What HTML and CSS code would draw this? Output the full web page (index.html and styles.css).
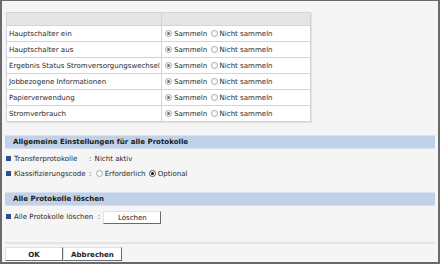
FILE: index.html
```html
<!DOCTYPE html>
<html lang="de">
<head>
    <meta charset="UTF-8">
    <title>Protokolleinstellungen</title>
    <link rel="stylesheet" href="styles.css">
</head>
<body>
    <div class="window">

        <!-- Log table -->
        <table class="log-table">
            <tr class="head"><th class="col-name"></th><th></th></tr>
            <tr>
                <td>Hauptschalter ein</td>
                <td><span class="radio dim"></span>Sammeln <span class="radio"></span>Nicht sammeln</td>
            </tr>
            <tr>
                <td>Hauptschalter aus</td>
                <td><span class="radio dim"></span>Sammeln <span class="radio"></span>Nicht sammeln</td>
            </tr>
            <tr>
                <td>Ergebnis Status Stromversorgungswechsel</td>
                <td><span class="radio dim"></span>Sammeln <span class="radio"></span>Nicht sammeln</td>
            </tr>
            <tr>
                <td>Jobbezogene Informationen</td>
                <td><span class="radio dim"></span>Sammeln <span class="radio"></span>Nicht sammeln</td>
            </tr>
            <tr>
                <td>Papierverwendung</td>
                <td><span class="radio dim"></span>Sammeln <span class="radio"></span>Nicht sammeln</td>
            </tr>
            <tr>
                <td>Stromverbrauch</td>
                <td><span class="radio dim"></span>Sammeln <span class="radio"></span>Nicht sammeln</td>
            </tr>
        </table>

        <!-- General settings -->
        <div class="section first">
            <div class="band">Allgemeine Einstellungen für alle Protokolle</div>
            <div class="item">
                <span class="bullet"></span><span class="key">Transferprotokolle</span><span class="sep">:</span> Nicht aktiv
            </div>
            <div class="item">
                <span class="bullet"></span><span class="key">Klassifizierungscode</span><span class="sep">:</span>
                <span class="radio"></span>Erforderlich
                <span class="radio on"></span>Optional
            </div>
        </div>

        <!-- Delete logs -->
        <div class="section">
            <div class="band">Alle Protokolle löschen</div>
            <div class="item item-delete">
                <span class="bullet"></span>Alle Protokolle löschen&nbsp; :
                <button class="btn btn-delete">Löschen</button>
            </div>
        </div>

        <div class="footer">
            <button class="btn btn-foot">OK</button><button class="btn btn-foot">Abbrechen</button>
        </div>
    </div>
</body>
</html>
```

FILE: styles.css
```css
* {
    margin: 0;
    padding: 0;
    box-sizing: border-box;
    font-family: "DejaVu Sans", Verdana, sans-serif;
}
body {
    background: #f5f5f5;
    font-size: 7.05px;
    color: #2a2a2a;
}

/* Window frame */
.window {
    width: 440px;
    height: 264px;
    border: 2px solid #6a6a6a;
    border-top-width: 1px;
    background: #f5f5f5;
    padding: 11px 3px 0 3px;
}

/* Log table */
.log-table {
    border-collapse: collapse;
    width: 305px;
    margin-left: 1px;
    background: #fff;
    box-shadow: 1px 1px 1px rgba(0, 0, 0, 0.08);
}
.log-table th, .log-table td {
    border: 1px solid #d4d4d4;
    text-align: left;
    white-space: nowrap;
}
.log-table th {
    background: #e5e5e5;
    height: 13px;
}
.log-table td {
    height: 16px;
    padding: 0 1px 0 2px;
    line-height: 14px;
}
.col-name { width: 155px; }

/* Radios */
.radio {
    display: inline-block;
    width: 7px;
    height: 7px;
    border: 1px solid #a8a8a8;
    border-radius: 50%;
    background: #fafafa;
    vertical-align: -1px;
    margin: 0 2px 0 1px;
    position: relative;
}
.radio.dim::after, .radio.on::after {
    content: "";
    position: absolute;
    left: 1px;
    top: 1px;
    width: 3px;
    height: 3px;
    border-radius: 50%;
    background: #6f6f6f;
}
.radio.on { border-color: #555; }
.radio.on::after { background: #111; }

/* Sections */
.section {
    margin-top: 11px;
}
.section.first { margin-top: 13px; }
.band {
    background: #c0d1e8;
    border-top: 1px solid #d6e2f2;
    border-bottom: 1px solid #d6e2f2;
    height: 14px;
    line-height: 12px;
    padding-left: 8px;
    font-weight: bold;
    color: #1a1a1a;
}
.item {
    height: 15px;
    line-height: 15px;
    padding-left: 1px;
    white-space: nowrap;
}
.section.first .band { margin-bottom: 2px; }
.item-delete {
    margin-top: 4px;
    height: 14px;
    line-height: 14px;
}
.bullet {
    display: inline-block;
    width: 5px;
    height: 5px;
    background: #2e4f8f;
    margin-right: 3px;
    vertical-align: 0;
}
.key {
    display: inline-block;
    width: 75px;
}
.sep { margin-right: 1px; }

/* Buttons */
.btn {
    background: #fff;
    border: 1px solid #e2e2e2;
    border-right-color: #6a6a6a;
    border-bottom-color: #6a6a6a;
    font-size: 7.05px;
    color: #222;
    height: 13px;
    line-height: 11px;
    vertical-align: middle;
}
.btn-delete {
    width: 58px;
    margin-left: 1px;
}

/* Footer */
.footer {
    margin-top: 18px;
    border-top: 2px solid #e4e4e4;
    padding-top: 3px;
}
.btn-foot {
    width: 58px;
    height: 14px;
    font-weight: bold;
}
.btn-foot + .btn-foot { width: 59px; }
```
